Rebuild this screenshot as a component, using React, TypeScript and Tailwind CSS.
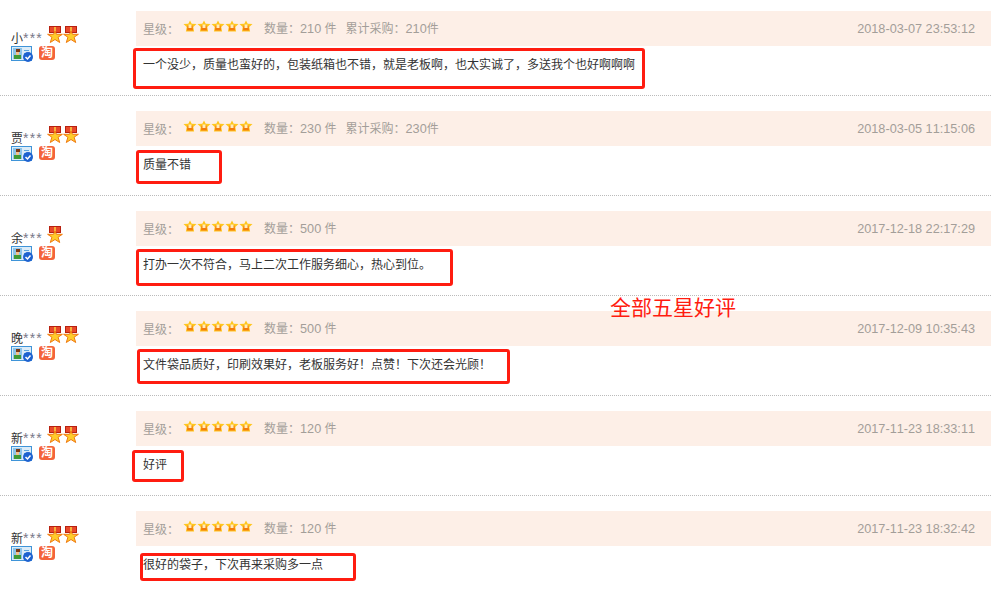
const reviews = [
  {
    name: "小",
    medals: 2,
    qty: "210",
    total: "210",
    date: "2018-03-07 23:53:12",
    comment: "一个没少，质量也蛮好的，包装纸箱也不错，就是老板啊，也太实诚了，多送我个也好啊啊啊",
    box: "-left-[3px] top-[2px] w-[512px] h-[41px]",
  },
  {
    name: "贾",
    medals: 2,
    qty: "230",
    total: "230",
    date: "2018-03-05 11:15:06",
    comment: "质量不错",
    box: "left-0 top-[4px] w-[86px] h-[34px]",
  },
  {
    name: "余",
    medals: 1,
    qty: "500",
    date: "2017-12-18 22:17:29",
    comment: "打办一次不符合，马上二次工作服务细心，热心到位。",
    box: "left-0 top-[3px] w-[317px] h-[37px]",
  },
  {
    name: "晚",
    medals: 2,
    qty: "500",
    date: "2017-12-09 10:35:43",
    comment: "文件袋品质好，印刷效果好，老板服务好！点赞！下次还会光顾！",
    box: "left-[1px] top-[3px] w-[373px] h-[35px]",
  },
  {
    name: "新",
    medals: 2,
    qty: "120",
    date: "2017-11-23 18:33:11",
    comment: "好评",
    box: "-left-[4px] top-[4px] w-[52px] h-[32px]",
  },
  {
    name: "新",
    medals: 2,
    qty: "120",
    date: "2017-11-23 18:32:42",
    comment: "很好的袋子，下次再来采购多一点",
    box: "left-[4px] top-[7px] w-[216px] h-[28px]",
  },
];

function Medal() {
  return (
    <svg width="16" height="18" viewBox="0 0 16 18" shapeRendering="crispEdges">
      <path d="M2 0h12v7H2z" fill="#b8200f" />
      <path d="M3 1h10v5H3z" fill="#e8482a" />
      <path d="M7 1h2v5H7z" fill="#f6b23a" />
      <path
        d="M8 5l1.500 3.300h5.900l-4.300 2.900 1.600 5.300L8 13.500l-4.700 3 1.600-5.300L.6 8.300h5.900z"
        fill="#ffcc2a"
        stroke="#f07a12"
        strokeWidth="1"
        shapeRendering="geometricPrecision"
      />
    </svg>
  );
}

function SmallStar() {
  return (
    <svg width="14" height="12" viewBox="0 0 14 12">
      <path d="M7 .5l1.700 3.200 4.800.4-3.200 3 .8 4.400H2.900l.8-4.400-3.200-3 4.800-.4z" fill="#ffc61e" />
      <path d="M4.500 5.500h5l.5 5H4z" fill="#f57c0c" />
      <path d="M5.500 4.500h3v3.500h-3z" fill="#ffedb8" />
    </svg>
  );
}

function CardIcon() {
  return (
    <svg width="23" height="16" viewBox="0 0 23 16" shapeRendering="crispEdges">
      <path d="M0 0h21v15H0z" fill="#3f94d8" />
      <path d="M1 1h19v13H1z" fill="#dcecf8" />
      <path d="M2 2h9v11H2z" fill="#8cc4ea" />
      <path d="M3 9h7v4H3z" fill="#3f9a35" />
      <path d="M5 3h4v3H5z" fill="#7a3a18" />
      <path d="M5 6h3v3H5z" fill="#f3c08c" />
      <path d="M13 4h5v1h-5zM13 7h5v1h-5z" fill="#5ea6dc" />
      <circle cx="17" cy="11" r="5" fill="#1e62d0" shapeRendering="geometricPrecision" />
      <path
        d="M14.500 11l2 2 3-3.500"
        fill="none"
        stroke="#fff"
        strokeWidth="1.500"
        shapeRendering="geometricPrecision"
      />
    </svg>
  );
}

function TaoBadge() {
  return (
    <span className="flex h-[14px] w-[16px] items-center justify-center rounded-[3px] bg-[#f4633a] text-[12px] leading-none font-bold text-white">
      淘
    </span>
  );
}

export default function App() {
  return (
    <div className="relative h-[594px] w-[998px] overflow-hidden bg-white font-['Liberation_Sans','Noto_Sans_CJK_SC',sans-serif] text-[12px] text-[#333] [font-kerning:none]">
      {reviews.map((r, i) => (
        <div
          key={i}
          className={`flex w-[991px] ${i === 0 ? "h-[96px] pt-[11px]" : "h-[100px] pt-[15px]"} ${
            i < 5 ? "border-b border-dotted border-[#bbb]" : ""
          }`}
        >
          <div className="w-[136px] shrink-0 pt-[15px] pl-[11px]">
            <div className="flex h-[20px] items-center gap-[3px]">
              <span className="mt-[4px] leading-none">
                {r.name}
                <span className="text-[14px] tracking-[1.220px] text-[#778]">***</span>
              </span>
              <span className="-mt-[2px] ml-[1px] flex">
                {Array.from({ length: r.medals }).map((_, m) => (
                  <Medal key={m} />
                ))}
              </span>
            </div>
            <div className="flex items-start gap-[5px]">
              <CardIcon />
              <TaoBadge />
            </div>
          </div>
          <div className="flex-1">
            <div className="flex h-[35px] items-center bg-[#fdefe7] pt-[2px] pr-[16px] pl-[7px] text-[#a39e99]">
              <span>星级：</span>
              <span className="-mt-[7px] ml-[4px] flex gap-0">
                {[0, 1, 2, 3, 4].map((s) => (
                  <SmallStar key={s} />
                ))}
              </span>
              <span className="ml-[11px]">
                数量：<span className="text-[12.700px]">{r.qty}</span> 件
              </span>
              {r.total && (
                <span className="ml-[9px]">
                  累计采购：<span className="text-[12.700px]">{r.total}</span>件
                </span>
              )}
              <span className="ml-auto text-[12.700px]">{r.date}</span>
            </div>
            <div className="relative pt-[11px] pl-[7px] leading-[16px]">
              {r.comment}
              <div className={`absolute rounded-[3px] border-[3px] border-[#ff1c10] ${r.box}`} />
            </div>
          </div>
        </div>
      ))}
      <div className="absolute top-[295px] left-[610px] text-[21px] leading-[26px] text-[#ff1c10]">
        全部五星好评
      </div>
    </div>
  );
}
